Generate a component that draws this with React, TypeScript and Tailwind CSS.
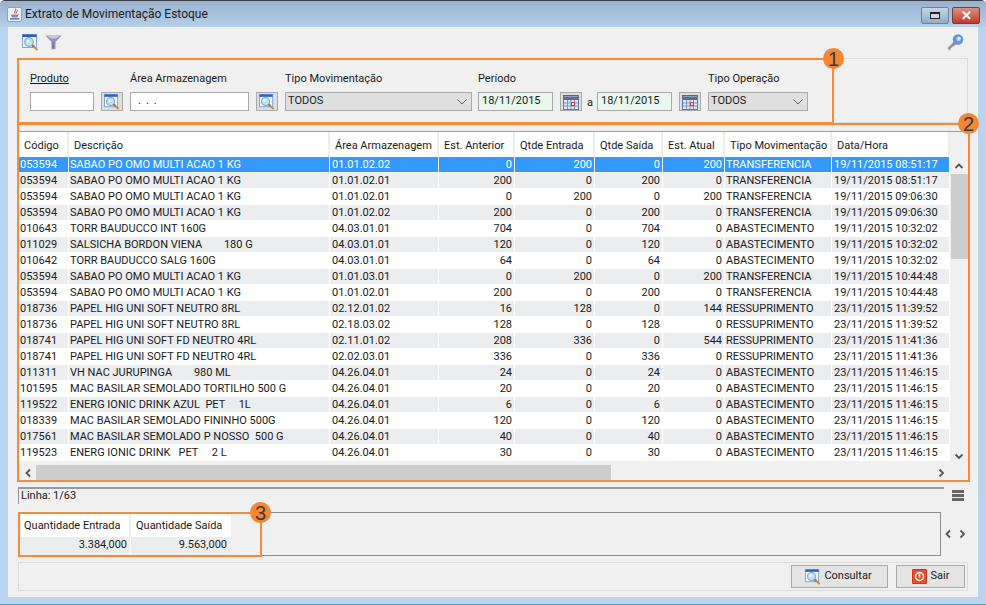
import React from "react";

type Row = {
  cod: string;
  desc: string;
  area: string;
  ant: string;
  ent: string;
  sai: string;
  atual: string;
  tipo: string;
  data: string;
};

const T = "TRANSFERENCIA";
const A = "ABASTECIMENTO";
const R = "RESSUPRIMENTO";
const OMO = "SABAO PO OMO MULTI ACAO 1 KG";

const rows: Row[] = [
  { cod: "053594", desc: OMO, area: "01.01.02.02", ant: "0", ent: "200", sai: "0", atual: "200", tipo: T, data: "19/11/2015 08:51:17" },
  { cod: "053594", desc: OMO, area: "01.01.02.01", ant: "200", ent: "0", sai: "200", atual: "0", tipo: T, data: "19/11/2015 08:51:17" },
  { cod: "053594", desc: OMO, area: "01.01.02.01", ant: "0", ent: "200", sai: "0", atual: "200", tipo: T, data: "19/11/2015 09:06:30" },
  { cod: "053594", desc: OMO, area: "01.01.02.02", ant: "200", ent: "0", sai: "200", atual: "0", tipo: T, data: "19/11/2015 09:06:30" },
  { cod: "010643", desc: "TORR BAUDUCCO INT 160G", area: "04.03.01.01", ant: "704", ent: "0", sai: "704", atual: "0", tipo: A, data: "19/11/2015 10:32:02" },
  { cod: "011029", desc: "SALSICHA BORDON VIENA        180 G", area: "04.03.01.01", ant: "120", ent: "0", sai: "120", atual: "0", tipo: A, data: "19/11/2015 10:32:02" },
  { cod: "010642", desc: "TORR BAUDUCCO SALG 160G", area: "04.03.01.01", ant: "64", ent: "0", sai: "64", atual: "0", tipo: A, data: "19/11/2015 10:32:02" },
  { cod: "053594", desc: OMO, area: "01.01.03.01", ant: "0", ent: "200", sai: "0", atual: "200", tipo: T, data: "19/11/2015 10:44:48" },
  { cod: "053594", desc: OMO, area: "01.01.02.01", ant: "200", ent: "0", sai: "200", atual: "0", tipo: T, data: "19/11/2015 10:44:48" },
  { cod: "018736", desc: "PAPEL HIG UNI SOFT NEUTRO 8RL", area: "02.12.01.02", ant: "16", ent: "128", sai: "0", atual: "144", tipo: R, data: "23/11/2015 11:39:52" },
  { cod: "018736", desc: "PAPEL HIG UNI SOFT NEUTRO 8RL", area: "02.18.03.02", ant: "128", ent: "0", sai: "128", atual: "0", tipo: R, data: "23/11/2015 11:39:52" },
  { cod: "018741", desc: "PAPEL HIG UNI SOFT FD NEUTRO 4RL", area: "02.11.01.02", ant: "208", ent: "336", sai: "0", atual: "544", tipo: R, data: "23/11/2015 11:41:36" },
  { cod: "018741", desc: "PAPEL HIG UNI SOFT FD NEUTRO 4RL", area: "02.02.03.01", ant: "336", ent: "0", sai: "336", atual: "0", tipo: R, data: "23/11/2015 11:41:36" },
  { cod: "011311", desc: "VH NAC JURUPINGA        980 ML", area: "04.26.04.01", ant: "24", ent: "0", sai: "24", atual: "0", tipo: A, data: "23/11/2015 11:46:15" },
  { cod: "101595", desc: "MAC BASILAR SEMOLADO TORTILHO 500 G", area: "04.26.04.01", ant: "20", ent: "0", sai: "20", atual: "0", tipo: A, data: "23/11/2015 11:46:15" },
  { cod: "119522", desc: "ENERG IONIC DRINK AZUL  PET     1L", area: "04.26.04.01", ant: "6", ent: "0", sai: "6", atual: "0", tipo: A, data: "23/11/2015 11:46:15" },
  { cod: "018339", desc: "MAC BASILAR SEMOLADO FININHO 500G", area: "04.26.04.01", ant: "120", ent: "0", sai: "120", atual: "0", tipo: A, data: "23/11/2015 11:46:15" },
  { cod: "017561", desc: "MAC BASILAR SEMOLADO P NOSSO  500 G", area: "04.26.04.01", ant: "40", ent: "0", sai: "40", atual: "0", tipo: A, data: "23/11/2015 11:46:15" },
  { cod: "119523", desc: "ENERG IONIC DRINK   PET     2 L", area: "04.26.04.01", ant: "30", ent: "0", sai: "30", atual: "0", tipo: A, data: "23/11/2015 11:46:15" },
];

const headers = ["Código", "Descrição", "Área Armazenagem", "Est. Anterior", "Qtde Entrada", "Qtde Saída", "Est. Atual", "Tipo Movimentação", "Data/Hora"];

const gridCols = "grid grid-cols-[50px_261px_109px_76px_80px_68px_62px_107px_118px]";

const SearchIcon = ({ size = 17 }: { size?: number }) => (
  <svg width={size} height={size} viewBox="0 0 17 17">
    <rect x="0.5" y="0.5" width="14" height="13" fill="#f4f8fd" stroke="#7fa3de" />
    <rect x="0.5" y="0.5" width="14" height="2.5" fill="#2a5fd0" />
    <circle cx="7" cy="8" r="4.3" fill="#b9e2f5" stroke="#8fa9bd" strokeWidth="1.2" />
    <circle cx="6" cy="7" r="1.6" fill="#e6f6fd" />
    <path d="M10.3 11.2 L15.5 16" stroke="#c98f45" strokeWidth="2" />
    <path d="M10 11 L12 12.8" stroke="#777" strokeWidth="2" />
  </svg>
);

const FunnelIcon = () => (
  <svg width="17" height="15" viewBox="0 0 17 15">
    <path d="M0.5 0.5 H16.5 L10.5 7 V14 L6.5 14.5 V7 Z" fill="#9b8cc4" />
    <path d="M2.5 1 H14.5 L11 3.5 H6 Z" fill="#cfc6e6" />
    <path d="M7.5 7 H9 V13.5 H7.5 Z" fill="#7c6eaa" />
  </svg>
);

const KeyIcon = () => (
  <svg width="17" height="17" viewBox="0 0 17 17">
    <path d="M7 7.5 L0.5 14 L2.5 16.5 L4 15 L3.5 14 L5 13.5 L5 12.5 L6.5 12.5 L9 10" fill="#8f9496" />
    <circle cx="11" cy="5.5" r="5.3" fill="#5f95de" />
    <circle cx="11.5" cy="5" r="2.4" fill="#a9cdf3" />
    <circle cx="12.3" cy="4.2" r="1.2" fill="#eef6fd" />
  </svg>
);

const CalendarIcon = () => (
  <svg width="16" height="16" viewBox="0 0 16 16">
    <rect x="0.5" y="1.5" width="15" height="14" fill="#dfe8f7" stroke="#5f78ad" />
    <path d="M1 1 V3 M3 1 V3 M5 1 V3 M7 1 V3 M9 1 V3 M11 1 V3 M13 1 V3 M15 1 V3" stroke="#555" strokeWidth="1" />
    <rect x="1" y="3" width="14" height="3" fill="#4b6db5" />
    <path d="M1 9 H15 M1 12 H15 M4.5 6 V15 M8 6 V15 M11.5 6 V15" stroke="#7d95c8" strokeWidth="1" />
    <rect x="8.5" y="8.5" width="3" height="3" fill="#fff" stroke="#e2321c" />
  </svg>
);

const JavaIcon = () => (
  <span className="flex h-[15px] w-[15px] items-center justify-center rounded-[2px] border border-[#93a0ae] bg-[#eef1f5]">
    <svg width="12" height="12" viewBox="0 0 12 12">
      <path d="M6.5 0.5 C8 2.5 4.5 3 6 5.5 M8.5 2 C8.5 3.5 7 3.5 7.5 5.2" stroke="#d8471f" fill="none" strokeWidth="1" />
      <path d="M2 6.5 H9.5 C9.5 8.5 8.5 9.5 7.5 9.5 H4 C3 9.5 2 8.5 2 6.5 Z" fill="#7d8fb0" />
      <path d="M1 10.8 H10.5" stroke="#3a62a8" strokeWidth="1.2" />
    </svg>
  </span>
);

const PowerIcon = () => (
  <span className="flex h-[15px] w-[15px] items-center justify-center rounded-[1px] border border-[#c8361a] bg-[#e8502f]">
    <svg width="11" height="11" viewBox="0 0 11 11">
      <circle cx="5.5" cy="5.5" r="4" fill="none" stroke="#fff" strokeWidth="1.3" />
      <path d="M5.5 2.5 V6.5" stroke="#fff" strokeWidth="1.5" />
    </svg>
  </span>
);

const Chevron = ({ dir, color = "#555" }: { dir: "up" | "down" | "left" | "right"; color?: string }) => {
  const d = {
    up: "M1.5 7 L5 3.5 L8.5 7",
    down: "M1.5 3.5 L5 7 L8.5 3.5",
    left: "M7 1.5 L3.5 5 L7 8.5",
    right: "M3.5 1.5 L7 5 L3.5 8.5",
  }[dir];
  return (
    <svg width="10" height="10" viewBox="0 0 10 10">
      <path d={d} fill="none" stroke={color} strokeWidth="1.8" />
    </svg>
  );
};

const IconBtn = ({ children }: { children: React.ReactNode }) => (
  <button className="flex h-[19px] w-[22px] items-center justify-center border border-[#a9a9a9] bg-[#dedede]">
    {children}
  </button>
);

const Combo = ({ w, text }: { w: string; text: string }) => (
  <div className={`flex h-[19px] ${w} items-center justify-between border border-[#a9a9a9] bg-[#dfdfdf] pl-[2px] pr-[3px]`}>
    <span>{text}</span>
    <svg width="12" height="8" viewBox="0 0 12 8">
      <path d="M1.5 1.5 L6 6 L10.5 1.5" fill="none" stroke="#666" strokeWidth="1" />
    </svg>
  </div>
);

const DateField = ({ w }: { w: string }) => (
  <div className={`flex h-[19px] ${w} items-center border border-[#a9a9a9] bg-[#e9f7ef] pl-[3px]`}>18/11/2015</div>
);

const Badge = ({ n, pos }: { n: string; pos: string }) => (
  <span className={`absolute ${pos} flex h-[21px] w-[21px] items-center justify-center rounded-full bg-[#f58634] font-['Liberation_Sans',sans-serif] text-[20px] leading-none text-[#3a3a3a]`}>
    {n}
  </span>
);

export default function App() {
  return (
    <div className="relative flex h-[605px] w-[986px] flex-col overflow-hidden rounded-t-[5px] border-y border-t-[#3a3f45] border-b-[#5f9fb5] bg-[#b9d4ec] font-['Roboto',sans-serif] text-[11px] text-[#1a1a1a]">
      {/* barra de titulo */}
      <div className="flex h-[26px] shrink-0 items-center justify-between bg-gradient-to-b from-[#98b2ce] to-[#b6cfe8] pl-[7px] pr-[6px]">
        <div className="flex items-center gap-[3px]">
          <JavaIcon />
          <span className="text-[12px] text-[#1a1a1a]">Extrato de Movimentação Estoque</span>
        </div>
        <div className="flex items-start gap-[3px] self-start pt-[6px]">
          <div className="flex h-[17px] w-[28px] items-center justify-center rounded-[2px] border border-[#6f8299] bg-gradient-to-b from-[#c4d6e8] to-[#93abc4]">
            <span className="h-[7px] w-[10px] border border-t-2 border-[#222] bg-white/40" />
          </div>
          <div className="flex h-[17px] w-[28px] items-center justify-center rounded-[2px] border border-[#7a3a36] bg-gradient-to-b from-[#dc8f86] to-[#bb3a2c] text-[13px] font-bold leading-none text-white">
            ✕
          </div>
        </div>
      </div>

      {/* corpo */}
      <div className="mx-[8px] flex h-[570px] shrink-0 flex-col bg-[#f0f0f0]">
        <div className="flex h-[31px] shrink-0 items-center justify-between pl-[14px] pr-[14px]">
          <div className="flex items-center gap-[6px]">
            <SearchIcon />
            <FunnelIcon />
          </div>
          <KeyIcon />
        </div>

        {/* filtros */}
        <div className="ml-[10px] mr-[10px] flex h-[65px] shrink-0 items-end border border-[#dcdcdc] pb-[11px] pl-[11px]">
          <div className="flex flex-col gap-[5px]">
            <span className="underline">Produto</span>
            <div className="h-[19px] w-[64px] border border-[#a9a9a9] bg-white" />
          </div>
          <div className="ml-[7px]">
            <IconBtn>
              <SearchIcon size={16} />
            </IconBtn>
          </div>
          <div className="ml-[7px] flex flex-col gap-[5px]">
            <span>Área Armazenagem</span>
            <div className="flex h-[19px] w-[119px] items-center border border-[#a9a9a9] bg-white pl-[7px] tracking-[5px]">...</div>
          </div>
          <div className="ml-[7px]">
            <IconBtn>
              <SearchIcon size={16} />
            </IconBtn>
          </div>
          <div className="ml-[7px] flex flex-col gap-[5px]">
            <span>Tipo Movimentação</span>
            <Combo w="w-[187px]" text="TODOS" />
          </div>
          <div className="ml-[6px] flex flex-col gap-[5px]">
            <span>Período</span>
            <DateField w="w-[75px]" />
          </div>
          <div className="ml-[7px]">
            <IconBtn>
              <CalendarIcon />
            </IconBtn>
          </div>
          <span className="ml-[5px] w-[10px]">a</span>
          <DateField w="w-[75px]" />
          <div className="ml-[7px]">
            <IconBtn>
              <CalendarIcon />
            </IconBtn>
          </div>
          <div className="ml-[7px] flex flex-col gap-[5px]">
            <span>Tipo Operação</span>
            <Combo w="w-[100px]" text="TODOS" />
          </div>
        </div>

        {/* tabela */}
        <div className="ml-[10px] mr-[10px] mt-[8px] flex h-[350px] w-[950px] shrink-0 flex-col border-t border-[#a0a0a0]">
          <div className="flex min-h-0 flex-1">
            <div className="ml-[1px] w-[931px]">
              <div className={`${gridCols} h-[25px] bg-white`}>
                {headers.map((h) => (
                  <div key={h} className="flex items-center whitespace-nowrap border-r-2 border-[#ededed] pl-[5px] pt-[3px]">
                    {h}
                  </div>
                ))}
              </div>
              {rows.map((r, i) => {
                const bg = i === 0 ? "bg-[#3399ff] text-white" : i % 2 === 1 ? "bg-[#ebedef]" : "bg-white";
                const cell = "flex items-center border-r border-white";
                return (
                  <div key={i} className={`${gridCols} h-[16px] border-b border-white leading-none ${bg}`}>
                    <div className={`${cell} pl-[1px]`}>{r.cod}</div>
                    <div className={`${cell} whitespace-pre pl-[1px]`}>{r.desc}</div>
                    <div className={`${cell} pl-[2px]`}>{r.area}</div>
                    <div className={`${cell} justify-end pr-[2px]`}>{r.ant}</div>
                    <div className={`${cell} justify-end pr-[2px]`}>{r.ent}</div>
                    <div className={`${cell} justify-end pr-[2px]`}>{r.sai}</div>
                    <div className={`${cell} justify-end pr-[2px]`}>{r.atual}</div>
                    <div className={`${cell} pl-[1px]`}>{r.tipo}</div>
                    <div className={`${cell} pl-[2px]`}>{r.data}</div>
                  </div>
                );
              })}
            </div>
            <div className="flex w-[18px] flex-col items-center pt-[25px]">
              <div className="flex h-[17px] items-center">
                <Chevron dir="up" />
              </div>
              <div className="h-[85px] w-[17px] bg-[#cdcdcd]" />
              <div className="flex-1" />
              <div className="flex h-[17px] items-center">
                <Chevron dir="down" />
              </div>
            </div>
          </div>
          <div className="flex h-[17px] shrink-0 items-center pl-[1px]">
            <div className="flex w-[17px] justify-center">
              <Chevron dir="left" />
            </div>
            <div className="h-[16px] w-[575px] bg-[#cdcdcd]" />
            <div className="flex-1" />
            <div className="mr-[19px] flex w-[17px] justify-center">
              <Chevron dir="right" />
            </div>
          </div>
        </div>

        {/* linha */}
        <div className="ml-[10px] mr-[10px] mt-[6px] flex h-[17px] shrink-0 items-center gap-[8px]">
          <div className="flex h-[17px] w-[926px] items-center border-l border-t-2 border-[#9a9a9a] border-b-white border-r-white pl-[2px]">
            Linha: 1/63
          </div>
          <div className="flex h-[11px] w-[12px] flex-col justify-between">
            <span className="h-[3px] bg-[#666]" />
            <span className="h-[3px] bg-[#666]" />
            <span className="h-[3px] bg-[#666]" />
          </div>
        </div>

        {/* totais */}
        <div className="ml-[10px] mr-[10px] mt-[8px] flex h-[44px] shrink-0 items-center">
          <div className="flex h-[44px] w-[923px] border border-[#8d8d8d] pl-[2px] pt-[1px]">
            <div className="w-[210px]">
              <div className="grid h-[23px] grid-cols-[110px_99px] bg-white pt-[1px]">
                <div className="flex items-center border-r-2 border-[#ededed] pl-[3px]">Quantidade Entrada</div>
                <div className="flex items-center pl-[5px]">Quantidade Saída</div>
              </div>
              <div className="grid h-[16px] grid-cols-[110px_99px] bg-[#ebedef]">
                <div className="flex items-center justify-end border-r border-white pr-[3px]">3.384,000</div>
                <div className="flex items-center justify-end pr-[3px]">9.563,000</div>
              </div>
            </div>
          </div>
          <div className="flex flex-1 justify-center gap-[4px]">
            <Chevron dir="left" />
            <Chevron dir="right" />
          </div>
        </div>

        {/* botoes */}
        <div className="ml-[10px] mr-[10px] mt-[6px] flex h-[29px] shrink-0 items-center justify-end gap-[8px] border border-[#dcdcdc] pr-[2px]">
          <button className="flex h-[23px] w-[97px] items-center justify-center gap-[3px] border border-[#a9a9a9] bg-[#e4e4e4] pr-[2px]">
            <SearchIcon size={16} />
            Consultar
          </button>
          <button className="flex h-[23px] w-[69px] items-center justify-center gap-[4px] border border-[#a9a9a9] bg-[#e4e4e4]">
            <PowerIcon />
            Sair
          </button>
        </div>
      </div>

      {/* marcacoes laranja sobre a tela */}
      <div className="absolute left-[17px] top-[57px] h-[66px] w-[817px] border-2 border-[#f68b3c]" />
      <div className="absolute left-[17px] top-[122px] h-[359px] w-[953px] border-2 border-[#f68b3c]" />
      <div className="absolute left-[18px] top-[511px] h-[45px] w-[244px] border-2 border-[#f68b3c]" />
      <Badge n="1" pos="left-[823px] top-[47px]" />
      <Badge n="2" pos="left-[958px] top-[112px]" />
      <Badge n="3" pos="left-[250px] top-[501px]" />
    </div>
  );
}
